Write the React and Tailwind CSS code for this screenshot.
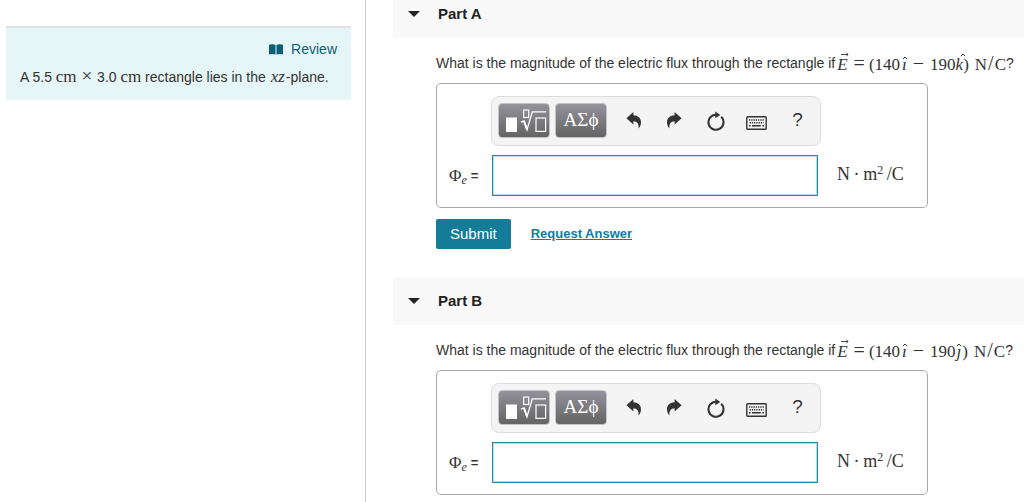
import React from "react";

const serif = "font-['Liberation_Serif',serif]";

function Hat({ children, tall = false }) {
  return (
    <span className="relative inline-block">
      {children}
      <svg
        className={tall ? "absolute left-1 top-[-2px]" : "absolute left-0 top-px"}
        width="6"
        height="4"
        viewBox="0 0 6 4"
        fill="none"
        stroke="#333"
        aria-hidden="true"
      >
        <path d="M0.8 3.2 L3 1 L5.2 3.2" />
      </svg>
    </span>
  );
}

function Vector({ children }) {
  return (
    <span className="relative inline-block">
      {children}
      <svg
        className="absolute left-1 top-[-3px]"
        width="8"
        height="5"
        viewBox="0 0 8 5"
        fill="none"
        stroke="#333"
        aria-hidden="true"
      >
        <path d="M0 2.5 H7 M5.4 1 L7.2 2.5 L5.4 4" strokeWidth="0.9" />
      </svg>
    </span>
  );
}

function TemplateIcon() {
  return (
    <svg width="41" height="24" viewBox="0 0 41 24" fill="none" stroke="#fff" aria-hidden="true">
      <rect x="0" y="8.5" width="11" height="14.5" fill="#fff" stroke="none" />
      <rect x="17.7" y="1" width="5" height="7.5" strokeWidth="1.2" />
      <path d="M15 13.2 L18 11.8 L21 20.8 L26.3 2.8 H40" strokeWidth="1.3" />
      <path d="M18 12 L21 20.5" strokeWidth="2" />
      <rect x="30" y="9" width="9.6" height="13.4" strokeWidth="1.2" />
    </svg>
  );
}

function UndoIcon({ flip = false }) {
  return (
    <svg
      className={flip ? "-scale-x-100" : ""}
      width="15"
      height="17"
      viewBox="0 0 15 17"
      fill="#333"
      aria-hidden="true"
    >
      <path d="M0.4 6.2 L7.4 0 V3.2 C12 3.3 15 6 15 10.2 C15 12.8 14 14.7 12.6 16.6 C13 12 11.4 9.4 7.4 9.2 V12.4 Z" />
    </svg>
  );
}

function ResetIcon() {
  return (
    <svg width="18" height="20" viewBox="0 0 18 20" fill="none" stroke="#333" aria-hidden="true">
      <path d="M9 3.7 A7.5 7.5 0 1 0 14.2 5.8" strokeWidth="2.1" />
      <path d="M8.3 0.6 L13.3 3.9 L8.3 7.2 Z" fill="#333" stroke="none" />
    </svg>
  );
}

function KeyboardIcon() {
  return (
    <svg width="21" height="14" viewBox="0 0 21 14" fill="none" stroke="#333" aria-hidden="true">
      <rect x="0.8" y="0.8" width="19.4" height="12.4" rx="0.8" strokeWidth="1.4" />
      <path d="M3 4 H18" strokeWidth="1.5" strokeDasharray="1.3 0.95" />
      <path d="M3.6 6.7 H17.6" strokeWidth="1.5" strokeDasharray="1.3 0.95" />
      <path d="M3 9.8 H4.6 M6 9.8 H14.8 M16.4 9.8 H18" strokeWidth="1.5" />
    </svg>
  );
}

function ToolButton({ label, children }) {
  return (
    <button
      type="button"
      aria-label={label}
      className="flex h-9 w-[41px] items-center justify-center text-[#333]"
    >
      {children}
    </button>
  );
}

const paletteButton =
  "flex h-[35px] w-[52px] items-center justify-center rounded-[4px] border border-[#c4c4c8] bg-linear-to-b from-[#94929c] to-[#646464] text-white";

function AnswerBox({ id }) {
  return (
    <div className="grid w-[492px] max-w-full grid-cols-[54px_330px_auto] gap-y-[9px] rounded-[5px] border border-[#a8a8a8] pb-[11px] pt-3">
      <div
        role="toolbar"
        aria-label="Equation tools"
        className="col-start-2 flex h-[50px] items-center rounded-[8px] border border-[#dcdcdc] bg-[#f4f4f4] pb-px pl-1.5"
      >
        <button type="button" aria-label="Templates" className={`${paletteButton} pl-1`}>
          <TemplateIcon />
        </button>
        <button type="button" aria-label="Symbols" className={`${paletteButton} ml-[5px] mr-1.5`}>
          <span className={`${serif} text-[19px]`}>ΑΣϕ</span>
        </button>
        <ToolButton label="Undo"><UndoIcon /></ToolButton>
        <ToolButton label="Redo"><UndoIcon flip /></ToolButton>
        <ToolButton label="Reset"><ResetIcon /></ToolButton>
        <ToolButton label="Keyboard shortcuts"><span className="pt-1"><KeyboardIcon /></span></ToolButton>
        <ToolButton label="Help"><span className="text-[19px]">?</span></ToolButton>
      </div>
      <label htmlFor={id} className="col-start-1 flex items-center pl-3 text-[13px]">
        <span className={`${serif} text-[17px]`}>
          Φ<sub className="text-[12px] italic">e</sub>
        </span>
        <span className="ml-1 font-bold">=</span>
      </label>
      <input
        id={id}
        type="text"
        className="ml-px mr-[3px] h-[41px] border border-[#2f83a3] bg-white px-2 text-[16px] inset-ring inset-ring-[#b9dbe6] outline-none"
      />
      <span className={`${serif} flex items-center pb-0.5 pl-4 text-[18px]`}>
        <span>
          N&thinsp;·&thinsp;m<sup className="text-[12px]">2</sup>&thinsp;/C
        </span>
      </span>
    </div>
  );
}

function Part({ name, unit, actions = false }) {
  return (
    <section>
      <h2 className="flex h-12 items-center bg-[#f9f9f9] pl-[15px] text-[15px] font-bold text-[#222]">
        <button type="button" aria-expanded="true" className="flex items-center gap-[18px]">
          <svg width="12" height="6" viewBox="0 0 12 6" fill="#222" aria-hidden="true">
            <path d="M0 0 H12 L6 6 Z" />
          </svg>
          {name}
        </button>
      </h2>
      <div className="pl-[43px]">
        <p className="flex h-[45px] items-center whitespace-nowrap pt-1.5 text-[14px]">
          What is the magnitude of the electric flux through the rectangle if
          <span className={`${serif} flex items-baseline pl-0.5 text-[17px] leading-5`}>
            <Vector><i className="pr-1">E</i></Vector>
            <span className="pl-0.5 pr-1 text-[20px]">=</span>
            <span className="pr-0.5">(140</span>
            <Hat><i>ı</i></Hat>
            <span className="px-1.5 text-[20px]">−</span>
            <span>190</span>
            <Hat tall={unit === "k"}><i className={unit === "k" ? "" : "px-px"}>{unit}</i></Hat>
            <span>)</span>
            <span className="pl-1.5">N<span className="px-px text-[20px]">/</span>C</span>
          </span>
          ?
        </p>
        <AnswerBox id={`answer-${unit}`} />
        {actions && (
          <div className="mt-[11px] flex items-center gap-5">
            <button type="button" className="h-[30px] rounded-[2px] bg-[#147c99] px-3.5 text-[15px] text-white">
              Submit
            </button>
            <a href="#request" className="text-[13px] font-bold text-[#147c99] underline">
              Request Answer
            </a>
          </div>
        )}
      </div>
    </section>
  );
}

export default function App() {
  return (
    <div className="flex min-h-screen overflow-hidden bg-white font-['Liberation_Sans',Arial,sans-serif] text-[#333]">
      <aside className="w-[366px] shrink-0 border-r border-[#c8ccd2] pl-1.5 pr-3.5 pt-[26px]">
        <div className="border-t-2 border-[#dfe5e5] bg-[#e6f6f6] px-3.5 pb-[13px] pt-[11px]">
          <a href="#review" className="flex items-center justify-end gap-2 text-[14px] leading-5 text-[#0b5e75]">
            <svg width="14" height="11" viewBox="0 0 14 11" fill="#0b5e75" aria-hidden="true">
              <path d="M0 0.8 C2.2 0 4.8 0 6.5 0.9 V10.6 C4.8 9.8 2.2 9.8 0 10.6 Z" />
              <path d="M7.5 0.9 C9.2 0 11.8 0 14 0.8 V10.6 C11.8 9.8 9.2 9.8 7.5 10.6 Z" />
            </svg>
            Review
          </a>
          <p className="mt-2 whitespace-nowrap text-[14px] leading-5">
            A 5.5 <span className={`${serif} text-[17px] leading-4`}>cm</span>{" "}
            <span className={`${serif} px-px text-[19px] leading-4`}>×</span> 3.0{" "}
            <span className={`${serif} text-[17px] leading-4`}>cm</span> rectangle lies in the{" "}
            <i className={`${serif} px-px text-[17px] leading-4`}>xz</i>-plane.
          </p>
        </div>
      </aside>
      <main className="-mt-2.5 flex min-w-0 grow flex-col gap-7 pl-[27px]">
        <Part name="Part A" unit="k" actions />
        <Part name="Part B" unit="ȷ" />
      </main>
    </div>
  );
}
